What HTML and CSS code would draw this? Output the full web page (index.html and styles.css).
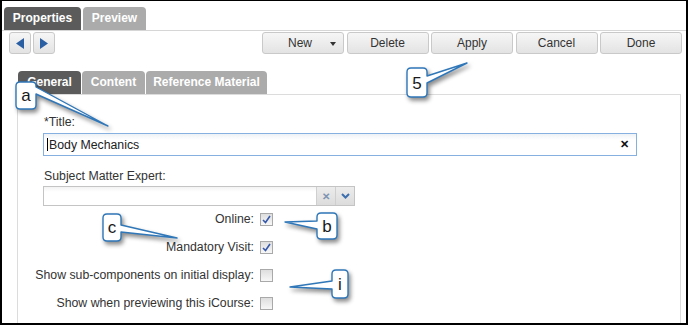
FILE: index.html
```html
<!DOCTYPE html>
<html lang="en">
<head>
    <meta charset="UTF-8">
    <title>Properties</title>
    <link rel="stylesheet" href="styles.css">
</head>
<body>

<div class="frame">
    <div class="tabs">
        <div class="tab active w-properties">Properties</div>
        <div class="tab w-preview">Preview</div>
    </div>

    <div class="toolbar">
        <div class="nav">
            <button class="btn nav-btn"><svg width="8" height="11" viewBox="0 0 8 11"><path d="M8 0 L0 5.5 L8 11 Z" fill="#2b5fa3"/></svg></button>
            <button class="btn nav-btn"><svg width="8" height="11" viewBox="0 0 8 11"><path d="M0 0 L8 5.5 L0 11 Z" fill="#2b5fa3"/></svg></button>
        </div>
        <div class="actions">
            <button class="btn action menu">New<span class="menu-caret"></span></button>
            <button class="btn action">Delete</button>
            <button class="btn action">Apply</button>
            <button class="btn action">Cancel</button>
            <button class="btn action">Done</button>
        </div>
    </div>

    <div class="subtabs">
        <div class="tab active w-general">General</div>
        <div class="tab w-content">Content</div>
        <div class="tab w-reference">Reference Material</div>
    </div>

    <div class="panel">
        <div class="field">
            <div class="label">*Title:</div>
            <div class="textbox">
                <span class="value"><span class="cursor"></span>Body Mechanics</span>
                <span class="clear">&#x2715;</span>
            </div>
        </div>
        <div class="field sme">
            <div class="label">Subject Matter Expert:</div>
            <div class="combo">
                <span class="combo-value"></span>
                <span class="combo-btn combo-clear">&#x2715;</span>
                <span class="combo-btn combo-drop"><svg width="9" height="6" viewBox="0 0 9 6"><path d="M1 1 L4.5 4.5 L8 1" fill="none" stroke="#3c6fae" stroke-width="2"/></svg></span>
            </div>
        </div>
        <div class="checks">
            <div class="check-row"><span class="check-label">Online:</span><span class="checkbox checked"><svg width="9" height="9" viewBox="0 0 9 9"><path d="M1 5 L3.5 7.5 L8 1" fill="none" stroke="#3558a8" stroke-width="1.6"/></svg></span></div>
            <div class="check-row"><span class="check-label">Mandatory Visit:</span><span class="checkbox checked"><svg width="9" height="9" viewBox="0 0 9 9"><path d="M1 5 L3.5 7.5 L8 1" fill="none" stroke="#3558a8" stroke-width="1.6"/></svg></span></div>
            <div class="check-row"><span class="check-label">Show sub-components on initial display:</span><span class="checkbox"></span></div>
            <div class="check-row"><span class="check-label">Show when previewing this iCourse:</span><span class="checkbox"></span></div>
        </div>
    </div>

    <!-- numbered callouts laid over the screen -->
    <svg class="callouts" width="688" height="325" viewBox="0 0 688 325">
        <g class="callout">
            <path d="M20 82 H32 Q36 82 36 86 V87 L108 126 L36 94 V105 Q36 109 32 109 H20 Q16 109 16 105 V86 Q16 82 20 82 Z"/>
            <text x="26" y="101">a</text>
        </g>
        <g class="callout">
            <path d="M411 68 H423 Q427 68 427 72 V76 L467 63 L427 83 V93 Q427 97 423 97 H411 Q407 97 407 93 V72 Q407 68 411 68 Z"/>
            <text x="417" y="89">5</text>
        </g>
        <g class="callout">
            <path d="M107 214 H117 Q121 214 121 218 V225 L177 238 L121 232 V237 Q121 241 117 241 H107 Q103 241 103 237 V218 Q103 214 107 214 Z"/>
            <text x="112" y="233">c</text>
        </g>
        <g class="callout">
            <path d="M321 213 H333 Q337 213 337 217 V235 Q337 239 333 239 H321 Q317 239 317 235 V229 L285 222 L317 221 V217 Q317 213 321 213 Z"/>
            <text x="327" y="232">b</text>
        </g>
        <g class="callout">
            <path d="M336 270 H344 Q348 270 348 274 V294 Q348 298 344 298 H336 Q332 298 332 294 V289 L290 287 L332 281 V274 Q332 270 336 270 Z"/>
            <text x="340" y="290">i</text>
        </g>
    </svg>
</div>

</body>
</html>
```

FILE: styles.css
```css
body {
    margin: 0;
    font-family: "Liberation Sans", Arial, sans-serif;
    background-color: #fff;
}
.frame {
    position: relative;
    width: 688px;
    height: 325px;
    box-sizing: border-box;
    border: 2px solid #000;
    border-top-width: 1px;
    overflow: hidden;
    background-color: #fff;
}
.tabs {
    display: flex;
    gap: 2px;
    padding: 6px 0 0 2px;
    border-bottom: 1px solid #d6d6d6;
}
.tab {
    height: 23px;
    line-height: 23px;
    font-size: 12px;
    font-weight: bold;
    text-align: center;
    color: #fff;
    background-color: #ababab;
    border-radius: 4px 4px 0 0;
}
.tab.active {
    background-color: #5b5b5b;
}
.w-properties { width: 77px; }
.w-preview { width: 63px; }
.w-general { width: 63px; }
.w-content { width: 63px; }
.w-reference { width: 121px; }
.toolbar {
    display: flex;
    justify-content: space-between;
    margin-top: 1px;
    padding: 0 4px 0 7px;
}
.nav {
    display: flex;
    gap: 2px;
}
.btn {
    height: 22px;
    box-sizing: border-box;
    margin: 0;
    padding: 0;
    border: 1px solid #c9c9c9;
    border-radius: 3px;
    background: linear-gradient(#f6f6f6, #e3e3e3);
    font-family: "Liberation Sans", Arial, sans-serif;
    font-size: 12px;
    color: #333;
}
.nav-btn {
    width: 22px;
    display: flex;
    align-items: center;
    justify-content: center;
}
.actions {
    display: flex;
    gap: 2.5px;
}
.action {
    width: 82px;
}
.menu {
    position: relative;
    padding-right: 6px;
}
.menu-caret {
    position: absolute;
    right: 7px;
    top: 9px;
    border-left: 3px solid transparent;
    border-right: 3px solid transparent;
    border-top: 4px solid #333;
}
.subtabs {
    display: flex;
    gap: 1px;
    margin-top: 17px;
    padding-left: 16px;
}
.panel {
    height: 260px;
    margin: 0 5px 0 15px;
    padding: 20px 0 0 25px;
    border: 1px solid #dcdcdc;
}
.field {
    margin-bottom: 13px;
}
.field.sme {
    margin-bottom: 0;
}
.label {
    font-size: 12.3px;
    line-height: 14px;
    color: #333;
    padding-left: 1px;
    margin-bottom: 4px;
}
.sme .label {
    margin-bottom: 3px;
}
.textbox {
    width: 594px;
    height: 23px;
    box-sizing: border-box;
    border: 1px solid #86b0e0;
    background: linear-gradient(#eef2f6, #fff 6px);
    display: flex;
    align-items: center;
    justify-content: space-between;
    padding: 0 7px 0 3px;
    font-size: 12.3px;
    color: #222;
}
.value {
    display: flex;
    align-items: center;
}
.cursor {
    width: 1px;
    height: 13px;
    background-color: #000;
    margin-right: 1px;
}
.clear {
    font-size: 11px;
    font-weight: bold;
    color: #111;
}
.combo {
    width: 312px;
    height: 20px;
    box-sizing: border-box;
    border: 1px solid #c4c4c4;
    display: flex;
}
.combo-value {
    flex: 1;
    background: linear-gradient(#f3f3f3, #fff 5px);
}
.combo-btn {
    width: 18px;
    display: flex;
    align-items: center;
    justify-content: center;
    background: linear-gradient(#ececec, #dcdcdc);
    border-left: 1px solid #cfcfcf;
}
.combo-clear {
    font-size: 10px;
    font-weight: bold;
    color: #7e93b3;
}
.checks {
    display: flex;
    flex-direction: column;
    gap: 14px;
    margin-top: 6px;
    margin-left: -25px;
}
.check-row {
    display: flex;
    align-items: center;
    height: 14px;
}
.check-label {
    width: 236px;
    text-align: right;
    font-size: 12.3px;
    color: #333;
    margin-right: 6px;
}
.checkbox {
    width: 13px;
    height: 13px;
    box-sizing: border-box;
    border: 1px solid #a9a9a9;
    background: linear-gradient(#dedede, #f7f7f7);
    display: flex;
    align-items: center;
    justify-content: center;
}
.callouts {
    position: absolute;
    top: -1px;
    left: -2px;
    pointer-events: none;
}
.callout path {
    fill: #fff;
    stroke: #2f77b8;
    stroke-width: 1.4;
    stroke-linejoin: round;
    filter: drop-shadow(2px 3px 2px rgba(0, 0, 0, 0.45));
}
.callout text {
    font-family: "Liberation Sans", Arial, sans-serif;
    font-size: 17px;
    fill: #1a1a1a;
    text-anchor: middle;
}
```
